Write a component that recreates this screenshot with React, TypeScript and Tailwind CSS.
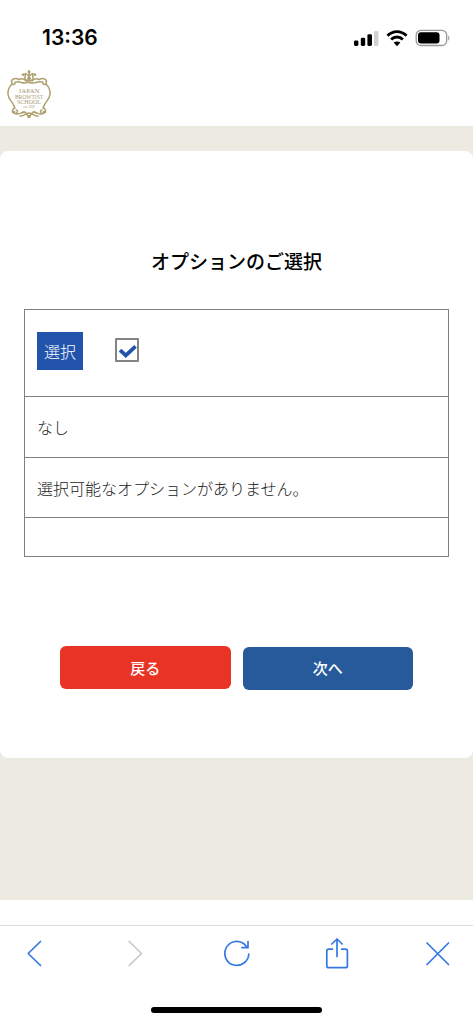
import React, { useState } from 'react';

const StatusBar = () => (
  <div className="flex h-[62px] items-center justify-between pl-[42px] pr-[23px] pt-[13px]">
    <span className="font-['Inter',sans-serif] text-[21px] font-semibold leading-6 text-black">13:36</span>
    <div className="flex items-center gap-[7px]">
      <svg width="26" height="18" viewBox="0 0 26 18" aria-hidden="true">
        <rect x="1" y="11.5" width="4.4" height="5.5" rx="1.4" />
        <rect x="7.8" y="8.7" width="4.4" height="8.3" rx="1.4" />
        <rect x="14.4" y="5.2" width="4.6" height="11.8" rx="1.4" />
        <rect x="21" y="2" width="4.4" height="15" rx="1.4" fill="#d0d0d0" />
      </svg>
      <svg width="22" height="18" viewBox="0 0 22 18" aria-hidden="true">
        <g fill="none" stroke="#000" strokeWidth="2.9">
          <path d="M1.5 6.8C7 1.2 15 1.2 20.5 6.8" />
          <path d="M5.1 10.5C8.5 7.2 13.5 7.2 16.9 10.5" />
        </g>
        <path d="M11 17.2 7.6 13.6C9.4 12 12.6 12 14.4 13.6Z" />
      </svg>
      <svg width="35" height="18" viewBox="0 0 35 18" aria-hidden="true">
        <rect x="1.2" y="1.3" width="30.5" height="15.2" rx="4.8" fill="none" stroke="#999" strokeWidth="1.3" />
        <rect x="3" y="3.2" width="21.5" height="11.4" rx="3" />
        <path d="M33.2 6.4c1.6.7 1.6 4.4 0 5.1z" fill="#999" />
      </svg>
    </div>
  </div>
);

const SchoolLogo = () => (
  <svg width="44" height="50" viewBox="0 0 44 50" role="img" aria-label="Japan Browtist School">
    <g fill="none" stroke="#b0a070" strokeWidth="1.5" strokeLinecap="round">
      <path d="M12 9.5C7 7 3.5 10 4.8 13.2 6 16 9 14 8 12.2" />
      <path d="M5 14C2 17 .8 20 .9 24 1.3 30 6.5 32 7.8 38" />
      <path d="M7.8 38c-3 1-3.2 4.6-.3 5.3 3 .6 4-2.8 1.7-3.2M8 43.5c4 1.8 6-1 9.5-1.8" />
      <path d="M32 9.5C37 7 40.5 10 39.2 13.2 38 16 35 14 36 12.2" />
      <path d="M39 14c3 3 4.2 6 4.1 10-.4 6-5.6 8-6.9 14" />
      <path d="M36.2 38c3 1 3.2 4.6.3 5.3-3 .6-4-2.8-1.7-3.2M36 43.5c-4 1.8-6-1-9.5-1.8" />
      <path d="M12 9.5c3-1.5 5.5-.5 7 1.7M32 9.5c-3-1.5-5.5-.5-7 1.7M9 12c5-1 7 2.7 12 .2 5 2.5 9-1.2 14-.2" />
      <path d="M16 4.5c2-1 3 1 2 2.5s1 4 4 4 5-2.5 4-4 0-3.5 2-2.5M22 1v9M18.5 3.5 22 6l3.5-2.5" />
      <path d="M13 46c3 1 5-3 9-3s6 4 9 3M15 43c3-3 4 1 7 4 3-3 4-7 7-4" />
    </g>
    <g fill="#b0a070">
      <circle cx="22" cy="1.8" r="1.5" />
      <circle cx="16" cy="4.8" r="1.3" />
      <circle cx="28" cy="4.8" r="1.3" />
      <circle cx="22" cy="8.5" r="2" />
      <circle cx="7" cy="42" r="1.3" />
      <circle cx="37" cy="42" r="1.3" />
      <circle cx="22" cy="46.5" r="1.8" />
    </g>
    <g fill="#a89a72" fontFamily="Liberation Serif, serif" textAnchor="middle">
      <text x="22" y="23" fontSize="7">JAPAN</text>
      <text x="22" y="28.5" fontSize="5.5">BROWTIST</text>
      <text x="22" y="34" fontSize="6">SCHOOL</text>
      <text x="22" y="37.5" fontSize="3">est. 2009</text>
    </g>
  </svg>
);

const OptionTable = () => {
  const [checked, setChecked] = useState(true);
  return (
    <table className="w-full border-collapse border border-[#808080] text-base font-light leading-6 text-[#222]">
      <tbody>
        <tr>
          <td className="h-[87px] border border-[#808080] px-3 pb-[5px]">
            <label className="flex items-center gap-8">
              <span className="bg-[#2354ac] px-[7px] py-[7px] text-white">選択</span>
              <span className="relative -mt-0.5 flex">
                <input
                  type="checkbox"
                  checked={checked}
                  onChange={(e) => setChecked(e.target.checked)}
                  className="peer size-6 appearance-none rounded-[1px] border-2 border-[#858285] bg-white"
                />
                <svg
                  viewBox="0 0 24 24"
                  className="pointer-events-none absolute inset-0 hidden size-6 peer-checked:block"
                  aria-hidden="true"
                >
                  <path d="m5 12.2 5.8 5.3L20.5 8.4" fill="none" stroke="#2354ac" strokeWidth="3.8" />
                </svg>
              </span>
            </label>
          </td>
        </tr>
        <tr>
          <td className="h-[61px] border border-[#808080] px-3">なし</td>
        </tr>
        <tr>
          <td className="h-[60px] border border-[#808080] px-3">選択可能なオプションがありません。</td>
        </tr>
        <tr>
          <td className="h-[39px] border border-[#808080]" />
        </tr>
      </tbody>
    </table>
  );
};

const BrowserBar = () => (
  <footer className="mt-[25px] border-t border-[#dcdcdc]">
    <nav className="flex items-center justify-between px-[19px] pt-3 text-[#3478e5]">
      <button type="button" aria-label="戻る" className="flex size-8 items-center justify-center">
        <svg width="32" height="32" viewBox="0 0 32 32" fill="none" stroke="currentColor" strokeWidth="1.7" strokeLinecap="round" strokeLinejoin="round">
          <path d="M21.5 3.5 9.2 15.5 21.5 27.5" />
        </svg>
      </button>
      <button type="button" aria-label="進む" disabled className="flex size-8 items-center justify-center text-[#c8c8c8]">
        <svg width="32" height="32" viewBox="0 0 32 32" fill="none" stroke="currentColor" strokeWidth="1.7" strokeLinecap="round" strokeLinejoin="round">
          <path d="m9.2 3.5 12.3 12-12.3 12" />
        </svg>
      </button>
      <button type="button" aria-label="再読み込み" className="flex size-8 items-center justify-center">
        <svg width="32" height="32" viewBox="0 0 32 32" fill="none" stroke="currentColor" strokeWidth="1.7" strokeLinecap="round" strokeLinejoin="round">
          <path d="M27.8 16A12 12 0 1 1 23 5.8l3.5 3.7M27 3.5v6.2h-6" />
        </svg>
      </button>
      <button type="button" aria-label="共有" className="flex size-8 items-center justify-center">
        <svg width="32" height="32" viewBox="0 0 32 32" fill="none" stroke="currentColor" strokeWidth="1.7" strokeLinecap="round" strokeLinejoin="round">
          <path d="M11.5 11.2H7.8A2 2 0 0 0 5.8 13.2v14.5a2 2 0 0 0 2 2h16.6a2 2 0 0 0 2-2V13.2a2 2 0 0 0-2-2h-3.7M16 18.5V1M10.8 6 16 1l5.2 5" />
        </svg>
      </button>
      <button type="button" aria-label="閉じる" className="flex size-8 items-center justify-center">
        <svg width="32" height="32" viewBox="0 0 32 32" fill="none" stroke="currentColor" strokeWidth="1.7" strokeLinecap="round">
          <path d="m5 5 21.5 21.5M26.5 5 5 26.5" />
        </svg>
      </button>
    </nav>
    <div className="mx-auto mb-[9px] mt-[37px] h-[6px] w-[36%] rounded-full bg-black" />
  </footer>
);

export default function App() {
  return (
    <div className="min-h-screen bg-white font-['Noto_Sans_CJK_JP',sans-serif]">
      <StatusBar />
      <header className="flex h-16 items-center pl-[7px] pt-[2px]">
        <SchoolLogo />
      </header>
      <main className="bg-[#edeae2] pb-[142px] pt-[25px]">
        <section className="rounded-lg bg-white px-6 pb-[68px] pt-[98px]">
          <h1 className="mb-9 text-center text-[19px] font-medium leading-6 text-black">オプションのご選択</h1>
          <OptionTable />
          <div className="mt-[89px] flex gap-3 px-9 text-[15px] font-medium leading-6 text-white">
            <button type="button" className="mb-px h-[43px] flex-1 rounded-md bg-[#e83424]">戻る</button>
            <button type="button" className="mt-px h-[43px] flex-1 rounded-md bg-[#275a9b] pb-0.5">次へ</button>
          </div>
        </section>
      </main>
      <BrowserBar />
    </div>
  );
}
